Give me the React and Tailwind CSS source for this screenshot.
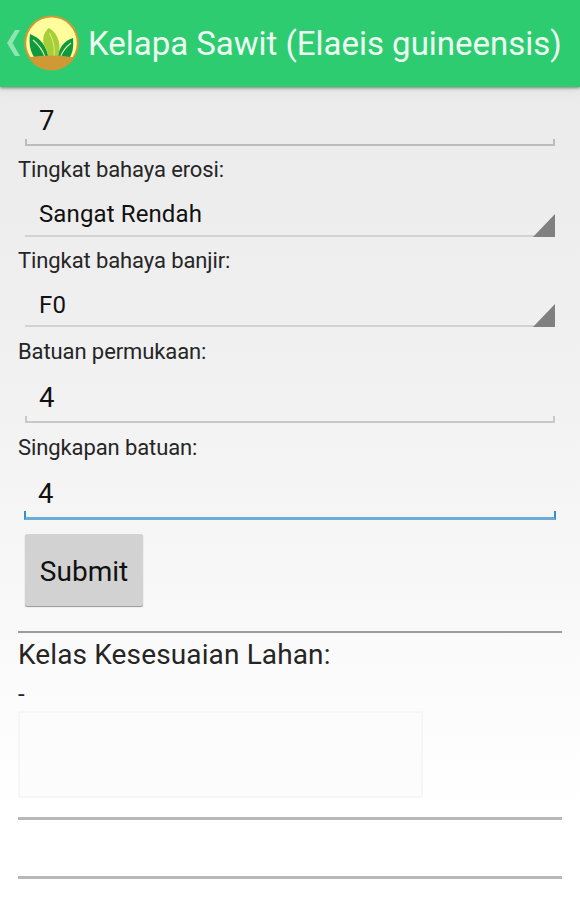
function Logo() {
  return (
    <svg className="h-[56px] w-[55px] shrink-0 -translate-y-px" viewBox="0 0 55 56">
      <ellipse cx="27.5" cy="28" rx="27.3" ry="27.6" fill="#cf9a35" />
      <clipPath id="disc">
        <ellipse cx="27.5" cy="28" rx="25.3" ry="25.6" />
      </clipPath>
      <g clipPath="url(#disc)">
        <path d="M0 0H55V42H0Z" fill="#fffd9c" />
        <path d="M6 19C16 23 22 30 24.500 42H10C5.500 35 5 27 6 19Z" fill="#0f9a3f" />
        <path d="M9 25C15 30 19 36 21 42" fill="none" stroke="#e9f3a0" strokeWidth="1.100" />
        <path d="M49 23C40 26 35 32 34 42H46C49.500 36 49.500 29 49 23Z" fill="#0f9a3f" />
        <path d="M47 28C42 32 38 37 36.500 42" fill="none" stroke="#e9f3a0" strokeWidth="1.100" />
        <path d="M25 13C35 19 38 31 33.500 42H24.500C23 36 21 31 19.500 29C18.500 22 20 17 25 13Z" fill="#a6ce39" />
        <path d="M25.500 18C30 26 31 34 30 42" fill="none" stroke="#d8e873" strokeWidth="1.200" />
        <path d="M0 44Q10 40.500 27 40.500T55 44V56H0Z" fill="#cf9a35" />
      </g>
    </svg>
  );
}

function Label({ children, className }) {
  return <div className={`flex items-center pl-[18px] text-[22px] leading-none tracking-[-0.100px] text-[#252525] ${className}`}>{children}</div>;
}

function Field({ value, className, line }) {
  return (
    <div className={`flex flex-col justify-end ${className}`}>
      <div className="flex flex-1 items-center pl-[14px] text-[27.500px] leading-none text-[#111]">{value}</div>
      <div className={line} />
    </div>
  );
}

function Select({ value, className, text }) {
  return (
    <div className={`mx-[25px] flex border-b-2 border-[#d2d2d2] ${className}`}>
      <div className={`flex flex-1 items-center pl-[14px] text-[24px] leading-none tracking-[0.120px] text-[#111] ${text}`}>{value}</div>
      <svg className="-mb-0.5 h-[23px] w-[22px] self-end" viewBox="0 0 22 23">
        <path d="M22 0V23H0Z" fill="#808080" />
      </svg>
    </div>
  );
}

export default function App() {
  return (
    <div className="flex h-[900px] w-[580px] flex-col overflow-hidden bg-linear-to-b from-[#ebebeb] from-10% via-[#f0f0f0] via-38% to-white to-90% font-['Roboto',sans-serif]">
      <header className="flex h-[87px] shrink-0 items-center bg-[#2ecc71] pl-[7px] shadow-[0_1px_3px_rgba(0,0,0,0.45),0_3px_10px_rgba(0,0,0,0.06)]">
        <svg className="mr-[4px] h-[26px] w-[13px] shrink-0 -translate-y-px" viewBox="0 0 13 26">
          <path d="M8 0H13L5.500 13L13 26H8L0 13Z" fill="#90e4b3" />
        </svg>
        <Logo />
        <h1 className="ml-[9px] text-[33px] leading-none tracking-[-0.020px] whitespace-nowrap text-[#edfbf2]">Kelapa Sawit (Elaeis guineensis)</h1>
      </header>

      <main className="flex flex-col">
        <Field value="7" className="mx-[25px] h-[59px] pt-[15px]" line="h-[7px] border-x-2 border-b-2 border-[#bcbcbc]" />
        <Label className="h-[48px]">Tingkat bahaya erosi:</Label>
        <Select value="Sangat Rendah" className="h-[43px]" text="pb-px" />
        <Label className="h-[48px]">Tingkat bahaya banjir:</Label>
        <Select value="F0" className="h-[42px]" text="pb-px" />
        <Label className="h-[49px]">Batuan permukaan:</Label>
        <Field value="4" className="mx-[25px] h-[47px] pt-[3px]" line="h-[7px] border-x-2 border-b-2 border-[#c8c8c8]" />
        <Label className="h-[48px] pt-px">Singkapan batuan:</Label>
        <Field value="4" className="mx-[24px] h-[49px] pt-[6px]" line="h-[9px] border-x-2 border-b-[3px] border-x-[#2c94c8] border-b-[#6aaddb]" />
        <button className="mt-[14px] ml-[25px] h-[72px] w-[118px] rounded-[2px] bg-[#d2d2d2] pt-[3px] text-[28px] leading-none text-[#111] shadow-[0_1px_1px_rgba(0,0,0,0.4)]">Submit</button>

        <section className="mx-[18px] mt-[25px] flex flex-col border-t-2 border-[#9c9c9c]">
          <h2 className="mt-[6px] text-[28px] leading-[32px] tracking-[0.130px] text-[#252525]">Kelas Kesesuaian Lahan:</h2>
          <p className="mt-[10px] h-[30px] text-[24px] leading-[26px] text-[#252525]">-</p>
          <div className="h-[87px] w-[405px] border-2 border-[#f6f6f6] bg-[#fcfcfc]" />
          <hr className="mt-[19px] border-t-[3px] border-[#b8b8b8]" />
          <hr className="mt-[56px] border-t-[3px] border-[#b8b8b8]" />
        </section>
      </main>
    </div>
  );
}
